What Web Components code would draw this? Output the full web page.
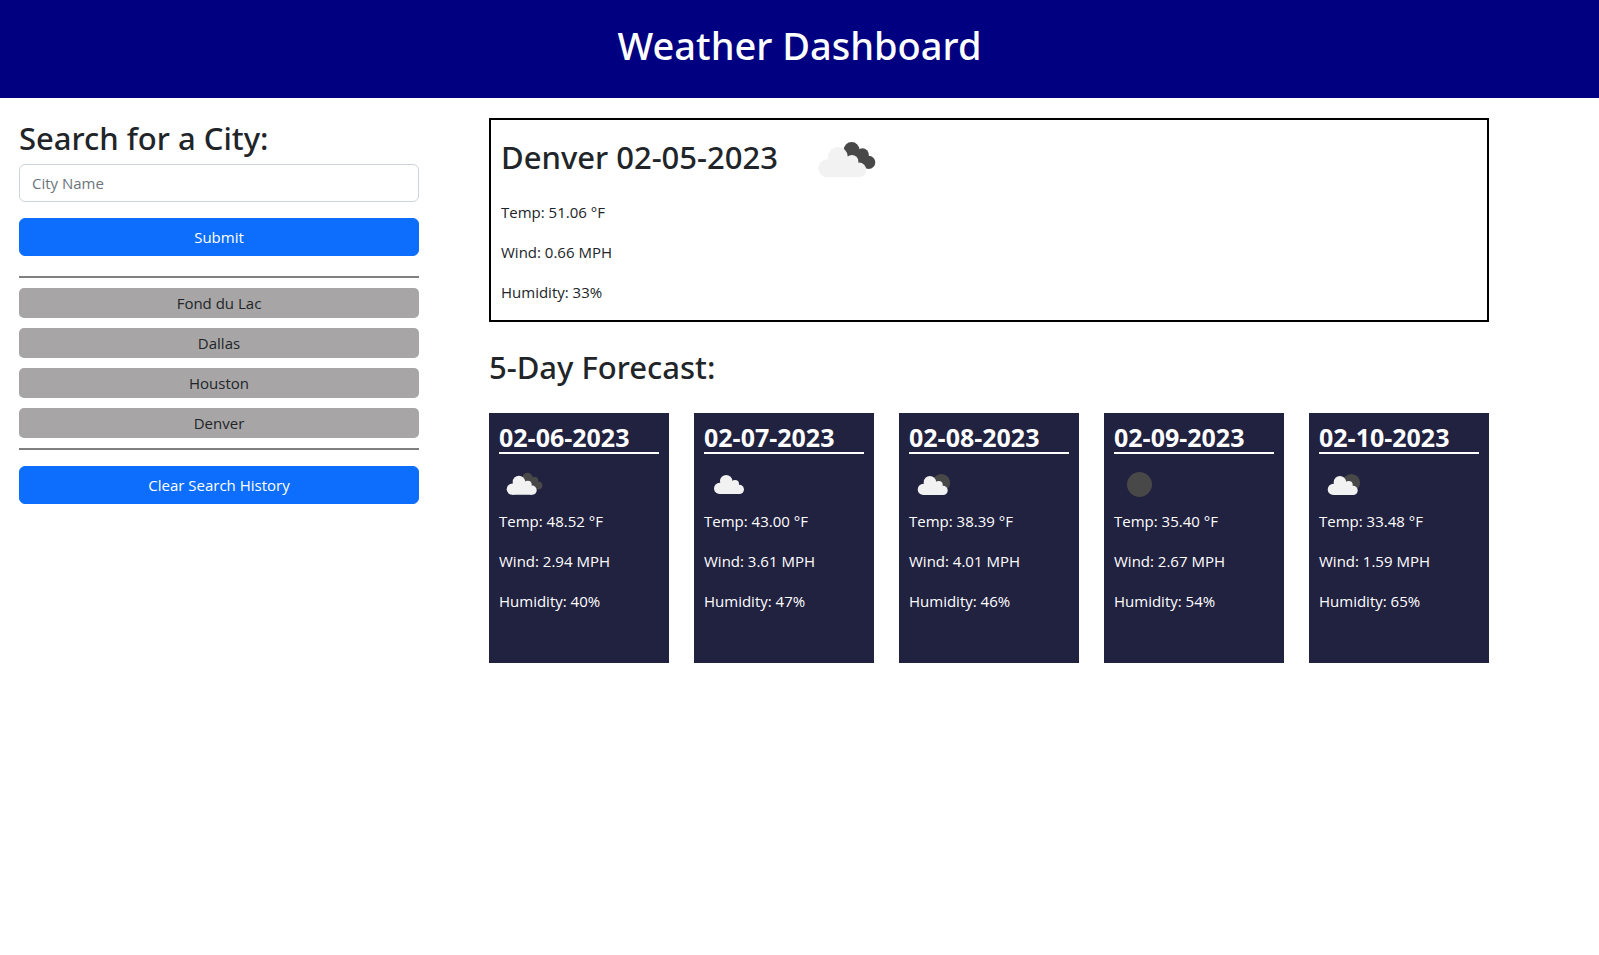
<!DOCTYPE html>
<html lang="en">
<head>
<meta charset="utf-8">
<meta name="viewport" content="width=device-width, initial-scale=1">
<title>Weather Dashboard</title>
<style>
  body { margin: 0; background: #fff; color: #212529; font: 400 15px/24px "Open Sans", "Noto Sans", sans-serif; }
</style>
</head>
<body>
<weather-app></weather-app>

<template id="app">
  <style>
    :host { display: block; }
    header { background: #000080; color: #fff; padding: 21px 20px 29px; text-align: center; }
    h1 { margin: 0; font: 500 38px/48px "Noto Sans", sans-serif; }
    main { display: grid; grid-template-columns: 2fr 5fr; gap: 70px; padding: 20px 110px 20px 19px; }
    h2 { margin: 26px 0 27px; font: 500 31px/38px "Noto Sans", sans-serif; }
    .days { display: grid; grid-template-columns: repeat(5, 1fr); gap: 25px; }
  </style>
  <header><h1>Weather Dashboard</h1></header>
  <main>
    <city-search>
      <history-item>Fond du Lac</history-item>
      <history-item>Dallas</history-item>
      <history-item>Houston</history-item>
      <history-item>Denver</history-item>
    </city-search>
    <section>
      <current-weather icon="overcast">
        <span slot="title">Denver 02-05-2023</span>
        <weather-stats temp="51.06" wind="0.66" humidity="33"></weather-stats>
      </current-weather>
      <h2>5-Day Forecast:</h2>
      <div class="days">
        <forecast-card date="02-06-2023" icon="overcast"><weather-stats temp="48.52" wind="2.94" humidity="40"></weather-stats></forecast-card>
        <forecast-card date="02-07-2023" icon="cloud"><weather-stats temp="43.00" wind="3.61" humidity="47"></weather-stats></forecast-card>
        <forecast-card date="02-08-2023" icon="partly"><weather-stats temp="38.39" wind="4.01" humidity="46"></weather-stats></forecast-card>
        <forecast-card date="02-09-2023" icon="clear"><weather-stats temp="35.40" wind="2.67" humidity="54"></weather-stats></forecast-card>
        <forecast-card date="02-10-2023" icon="partly"><weather-stats temp="33.48" wind="1.59" humidity="65"></weather-stats></forecast-card>
      </div>
    </section>
  </main>
</template>

<template id="search">
  <style>
    :host { display: block; }
    form { margin: 0; }
    label { display: block; padding-top: 1px; margin-bottom: 7px; font: 500 31px/38px "Noto Sans", sans-serif; }
    input, button { box-sizing: border-box; display: block; width: 100%; height: 38px; padding: 6px 12px; border-radius: 6px; font: inherit; }
    input { border: 1px solid #ced4da; background: #fff; color: inherit; margin-bottom: 16px; }
    input::placeholder { color: #6c757d; opacity: 1; }
    button { border: 1px solid #0d6efd; background: #0d6efd; color: #fff; cursor: pointer; }
    .history { display: grid; gap: 10px; margin: 20px 0 16px; padding: 10px 0; border: solid #808080; border-width: 2px 0; }
  </style>
  <form onsubmit="return false">
    <label for="city">Search for a City:</label>
    <input id="city" type="text" placeholder="City Name">
    <button type="submit">Submit</button>
  </form>
  <div class="history"><slot></slot></div>
  <button type="button">Clear Search History</button>
</template>

<template id="item">
  <style>
    :host { display: block; }
    button { display: block; width: 100%; height: 30px; padding: 0; border: 0; border-radius: 5px; background: #a7a5a5; color: #212529; font: inherit; cursor: pointer; }
  </style>
  <button type="button"><slot></slot></button>
</template>

<template id="current">
  <style>
    :host { display: block; border: 2px solid #000; padding: 0 10px; }
    .top { display: flex; align-items: center; gap: 28px; }
    h2 { margin: 0 0 6px; font: 500 31px/38px "Noto Sans", sans-serif; }
    weather-icon { width: 80px; height: 80px; }
  </style>
  <div class="top"><h2><slot name="title"></slot></h2><weather-icon></weather-icon></div>
  <slot></slot>
</template>

<template id="card">
  <style>
    :host { display: block; box-sizing: border-box; min-height: 250px; padding: 10px; background: #212140; color: #fff; }
    h3 { margin: 0 0 5px; border-bottom: 2px solid #fff; font-size: 25px; line-height: 29px; font-weight: 700; }
    weather-icon { width: 50px; height: 50px; }
  </style>
  <h3></h3>
  <weather-icon></weather-icon>
  <slot></slot>
</template>

<template id="stats">
  <style>
    :host { display: block; }
    p { margin: 0 0 16px; }
  </style>
  <p class="t"></p><p class="w"></p><p class="h"></p>
</template>

<script>
const CLOUD = '<g fill="#f2f2f2"><circle cx="15.600" cy="29.400" r="5.600"/><circle cx="22.200" cy="22.200" r="6.200"/><circle cx="31" cy="25" r="4"/><circle cx="35.400" cy="30.400" r="4.600"/><path d="M15.600 24H28L35.400 26V35H15.600Z"/></g>';
const ICONS = {
  cloud: CLOUD,
  clear: '<circle cx="25.500" cy="25.500" r="12.500" fill="#484848"/>',
  partly: '<circle cx="32.300" cy="23.700" r="8.800" fill="#484848"/><g transform="translate(-1.300 1)">' + CLOUD + '</g>',
  overcast: '<g fill="#484848"><circle cx="28.500" cy="18.800" r="5"/><circle cx="35.300" cy="21.700" r="4"/><circle cx="39.200" cy="26.500" r="4.100"/><path d="M28 17L36 20L40 28L36 30L28 24Z"/></g><g transform="translate(-2.300 .8)">' + CLOUD + '</g>'
};
class Base extends HTMLElement {
  constructor(id) {
    super();
    this.attachShadow({ mode: 'open' }).append(document.getElementById(id).content.cloneNode(true));
  }
  $(s) { return this.shadowRoot.querySelector(s); }
}
customElements.define('weather-icon', class extends HTMLElement {
  static observedAttributes = ['name'];
  constructor() { super(); this.attachShadow({ mode: 'open' }); }
  attributeChangedCallback(_, __, name) {
    this.shadowRoot.innerHTML = '<style>:host{display:block}svg{display:block;width:100%;height:100%}</style><svg viewBox="0 0 50 50" aria-hidden="true">' + ICONS[name] + '</svg>';
  }
});
customElements.define('weather-stats', class extends Base {
  constructor() { super('stats'); }
  connectedCallback() {
    this.$('.t').textContent = `Temp: ${this.getAttribute('temp')} °F`;
    this.$('.w').textContent = `Wind: ${this.getAttribute('wind')} MPH`;
    this.$('.h').textContent = `Humidity: ${this.getAttribute('humidity')}%`;
  }
});
customElements.define('history-item', class extends Base { constructor() { super('item'); } });
customElements.define('city-search', class extends Base { constructor() { super('search'); } });
customElements.define('current-weather', class extends Base {
  constructor() { super('current'); }
  connectedCallback() { this.$('weather-icon').setAttribute('name', this.getAttribute('icon')); }
});
customElements.define('forecast-card', class extends Base {
  constructor() { super('card'); }
  connectedCallback() {
    this.$('h3').textContent = this.getAttribute('date');
    this.$('weather-icon').setAttribute('name', this.getAttribute('icon'));
  }
});
customElements.define('weather-app', class extends Base { constructor() { super('app'); } });
</script>
</body>
</html>
